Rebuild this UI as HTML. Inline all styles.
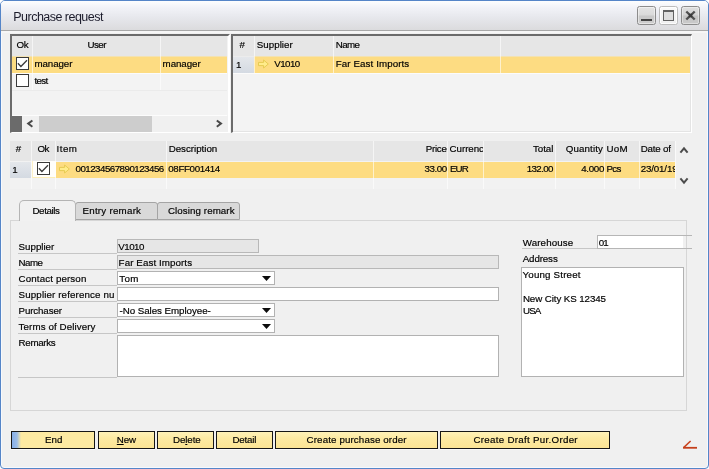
<!DOCTYPE html>
<html><head><meta charset="utf-8"><title>Purchase request</title>
<style>
*{box-sizing:border-box;margin:0;padding:0}
html,body{width:709px;height:469px;overflow:hidden;background:#fff}
body{font-family:"Liberation Sans",sans-serif;font-size:9.75px;color:#000;position:relative}
.a{position:absolute}
.t{position:absolute;white-space:nowrap;line-height:12px;height:12px;color:#000;-webkit-text-stroke:0.18px #000}
#win{left:0;top:0;width:709px;height:469px;background:#f0f0f0;border:1px solid #5585c8;border-radius:5px 5px 4px 4px;box-shadow:inset 0 0 0 1px #f6f9fd}
#title{left:1px;top:1px;width:707px;height:29px;background:linear-gradient(#fdfeff,#f2f3f8 22%,#e7e8ed 55%,#dbdbdd);border-radius:4px 4px 0 0}
#tline{left:1px;top:30px;width:707px;height:1px;background:#a8a8a8}
#tline2{left:1px;top:31px;width:707px;height:2px;background:#f6f6f6}
.panel{background:#f3f3f3;border-top:2px solid #6b6b6b;border-left:2px solid #6b6b6b;border-right:1px solid #fff;border-bottom:1px solid #fff}
.hdr{background:#e6e6e6}
.sel{background:#fddc82}
.vl{position:absolute;width:1px;background:rgba(255,255,255,.6)}
.hl{position:absolute;height:1px;background:#ebebeb}
.cb{position:absolute;width:13px;height:13px;border:1px solid #3a3a3a;background:#fff}
.inp{position:absolute;background:#fff;border:1px solid #b2b2b2;height:14px}
.dis{background:#e6e6e6;border-color:#b8b8b8}
.ul{position:absolute;height:1px;background:#c6c6c6}
.btn{position:absolute;top:431px;height:18px;border:1px solid #161616;background:linear-gradient(#fff2b8,#fdeaa2 40%,#fce595);box-shadow:0 1px 0 #fafafa}
.tab{position:absolute;background:#d9d9d9;border:1px solid #a4a4a4;border-radius:3px 3px 0 0}
.num{background:linear-gradient(#e4e7eb,#d4dae2)}
</style></head><body>
<div id="win" class="a"></div>
<div id="title" class="a"></div>
<div id="tline" class="a"></div>
<div id="tline2" class="a"></div>

<!-- window buttons -->
<div class="a" style="left:637px;top:6px;width:19px;height:19px;border:1px solid #8c8c8c;border-radius:2.5px;background:linear-gradient(#e4e4e4,#dadada 47%,#c8c8c8 53%,#cecece);box-shadow:inset 0 0 0 1px rgba(255,255,255,.45)"></div>
<div class="a" style="left:641px;top:19px;width:11px;height:2px;background:#444"></div>
<div class="a" style="left:659px;top:6px;width:19px;height:19px;border:1px solid #bcbcbc;border-radius:2.5px;background:linear-gradient(#fafafa,#efefef);box-shadow:inset 0 0 0 1px rgba(255,255,255,.8)"></div>
<div class="a" style="left:663px;top:10px;width:11px;height:11px;border:1px solid #626262;border-top-width:2px;background:#dedede"></div>
<div class="a" style="left:681px;top:6px;width:19px;height:19px;border:1px solid #8c8c8c;border-radius:2.5px;background:linear-gradient(#dedede,#d4d4d4 47%,#c4c4c4 53%,#cacaca);box-shadow:inset 0 0 0 1px rgba(255,255,255,.4)"></div>
<svg class="a" style="left:681px;top:6px" width="19" height="19" viewBox="0 0 19 19"><path d="M5.3 5.5 L13.7 13.5 M13.7 5.5 L5.3 13.5" stroke="#505050" stroke-width="2.4" stroke-linecap="butt"/><rect x="7.8" y="7.8" width="3.4" height="3.4" fill="#3a3a3a"/></svg>

<!-- left panel -->
<div class="a panel" style="left:10px;top:34px;width:220px;height:99px;border-right-width:2px"></div>
<div class="a hdr" style="left:12px;top:36px;width:215px;height:20px"></div>
<div class="a" style="left:12px;top:56px;width:215px;height:1px;background:#f3e2b2"></div>
<div class="a sel" style="left:12px;top:57px;width:215px;height:16px"></div>
<div class="vl" style="left:32px;top:36px;height:55px"></div>
<div class="vl" style="left:160px;top:36px;height:55px"></div>
<div class="hl" style="left:12px;top:73px;width:215px;background:#fbfbfb"></div>
<div class="hl" style="left:12px;top:90px;width:215px"></div>
<div class="cb" style="left:16px;top:57px"></div>
<svg class="a" style="left:16px;top:57px" width="13" height="13" viewBox="0 0 13 13"><path d="M1.9 6.3 L4.9 9.5 L11 3.3" fill="none" stroke="#3a3a3a" stroke-width="1.3"/></svg>
<div class="cb" style="left:16px;top:74px"></div>
<!-- scrollbar -->
<div class="a" style="left:12px;top:115px;width:215px;height:1px;background:#fcfcfc"></div>
<div class="a" style="left:12px;top:116px;width:216px;height:16px;background:#f0f0f0"></div>
<div class="a" style="left:10px;top:116px;width:12px;height:16px;background:#6b6b6b"></div>
<div class="a" style="left:39px;top:116px;width:113px;height:16px;background:#cdcdcd"></div>
<svg class="a" style="left:26px;top:119px" width="8" height="10" viewBox="0 0 8 10"><path d="M6.4 1.5 L2.2 4.6 L6.4 7.7" fill="none" stroke="#4a4a4a" stroke-width="2"/></svg>
<svg class="a" style="left:215px;top:119px" width="8" height="10" viewBox="0 0 8 10"><path d="M1.8 1.5 L6 4.6 L1.8 7.7" fill="none" stroke="#4a4a4a" stroke-width="2"/></svg>

<!-- right panel -->
<div class="a panel" style="left:231px;top:34px;width:461px;height:99px;box-shadow:inset -1px -1px 0 #e4e4e4"></div>
<div class="a hdr" style="left:233px;top:36px;width:457px;height:20px"></div>
<div class="a" style="left:233px;top:56px;width:21px;height:1px;background:#ececec"></div>
<div class="a" style="left:254px;top:56px;width:436px;height:1px;background:#f3e2b2"></div>
<div class="a sel" style="left:254px;top:57px;width:436px;height:16px"></div>
<div class="a num" style="left:233px;top:57px;width:21px;height:16px"></div>
<div class="vl" style="left:254px;top:36px;height:38px"></div>
<div class="vl" style="left:333px;top:36px;height:38px"></div>
<div class="vl" style="left:500px;top:36px;height:38px"></div>
<div class="hl" style="left:233px;top:73px;width:457px;background:#fbfbfb"></div>
<svg class="a" style="left:258px;top:59px" width="11" height="10" viewBox="0 0 11 10"><path d="M0.5 3.4 H5.6 V1 L10.3 5 L5.6 9 V6.6 H0.5 Z" fill="#ffec8a" stroke="#e6ca52" stroke-width="1"/></svg>

<!-- items table -->
<div class="a hdr" style="left:10px;top:141px;width:665px;height:20px"></div>
<div class="a" style="left:10px;top:161px;width:665px;height:28px;background:#f2f2f2"></div>
<div class="a sel" style="left:56px;top:162px;width:619px;height:16px"></div>
<div class="a num" style="left:10px;top:162px;width:21px;height:16px"></div>
<div class="a" style="left:32px;top:161px;width:24px;height:17px;background:#fffefb;border-bottom:1px solid #fdeeb8;border-left:1px solid #fdf1c8"></div>
<div class="vl" style="left:31px;top:141px;height:48px"></div>
<div class="vl" style="left:55px;top:141px;height:48px"></div>
<div class="vl" style="left:166px;top:141px;height:48px"></div>
<div class="vl" style="left:373px;top:141px;height:48px"></div>
<div class="vl" style="left:447px;top:141px;height:48px"></div>
<div class="vl" style="left:483px;top:141px;height:48px"></div>
<div class="vl" style="left:555px;top:141px;height:48px"></div>
<div class="vl" style="left:604px;top:141px;height:48px"></div>
<div class="vl" style="left:639px;top:141px;height:48px"></div>
<div class="vl" style="left:675px;top:141px;height:48px;background:#fafafa"></div>
<div class="cb" style="left:37px;top:162px"></div>
<svg class="a" style="left:37px;top:162px" width="13" height="13" viewBox="0 0 13 13"><path d="M1.9 6.3 L4.9 9.5 L11 3.3" fill="none" stroke="#3a3a3a" stroke-width="1.3"/></svg>
<svg class="a" style="left:59px;top:164px" width="11" height="10" viewBox="0 0 11 10"><path d="M0.5 3.4 H5.6 V1 L10.3 5 L5.6 9 V6.6 H0.5 Z" fill="#ffec8a" stroke="#e6ca52" stroke-width="1"/></svg>
<svg class="a" style="left:679px;top:146px" width="10" height="8" viewBox="0 0 10 8"><path d="M1.4 6.6 L5 2.4 L8.6 6.6" fill="none" stroke="#4c4c4c" stroke-width="2"/></svg>
<svg class="a" style="left:679px;top:177px" width="10" height="8" viewBox="0 0 10 8"><path d="M1.4 1.4 L5 5.6 L8.6 1.4" fill="none" stroke="#4c4c4c" stroke-width="2"/></svg>

<!-- tabs -->
<div class="a" style="left:10px;top:220px;width:677px;height:191px;border:1px solid #d6d6d6;background:#f0f0f0"></div>
<div class="tab" style="left:75px;top:202px;width:83px;height:18px"></div>
<div class="tab" style="left:157px;top:202px;width:83px;height:18px"></div>
<div class="tab" style="left:19px;top:200px;width:57px;height:21px;background:#f1f1f1;border-color:#b4b4b4;border-bottom:none;border-radius:5px 5px 0 0"></div>

<!-- form -->
<div class="ul" style="left:18px;top:253px;width:99px"></div>
<div class="ul" style="left:18px;top:269px;width:99px"></div>
<div class="ul" style="left:18px;top:285px;width:99px"></div>
<div class="ul" style="left:18px;top:301px;width:99px"></div>
<div class="ul" style="left:18px;top:317px;width:99px"></div>
<div class="ul" style="left:18px;top:333px;width:99px"></div>
<div class="ul" style="left:18px;top:377px;width:99px"></div>
<div class="inp dis" style="left:117px;top:239px;width:142px"></div>
<div class="inp dis" style="left:117px;top:255px;width:382px"></div>
<div class="inp" style="left:117px;top:271px;width:158px"></div>
<div class="inp" style="left:117px;top:287px;width:382px"></div>
<div class="inp" style="left:117px;top:303px;width:158px"></div>
<div class="inp" style="left:117px;top:319px;width:158px"></div>
<div class="inp" style="left:117px;top:335px;width:382px;height:42px"></div>
<svg class="a" style="left:262px;top:276px" width="9" height="5" viewBox="0 0 9 5"><path d="M0 0 H9 L4.5 5 Z" fill="#0c0c0c"/></svg>
<svg class="a" style="left:262px;top:308px" width="9" height="5" viewBox="0 0 9 5"><path d="M0 0 H9 L4.5 5 Z" fill="#0c0c0c"/></svg>
<svg class="a" style="left:262px;top:324px" width="9" height="5" viewBox="0 0 9 5"><path d="M0 0 H9 L4.5 5 Z" fill="#0c0c0c"/></svg>

<div class="ul" style="left:522px;top:248px;width:75px"></div>
<div class="a" style="left:597px;top:235px;width:95px;height:14px;border-top:1px solid #b6b6b6;border-bottom:1px solid #b6b6b6;border-left:1px solid #b6b6b6"></div>
<div class="a" style="left:598px;top:236px;width:85px;height:12px;background:#fff"></div>
<div class="a" style="left:686px;top:236px;width:1px;height:12px;background:#d6d6d6"></div>
<div class="inp" style="left:521px;top:267px;width:163px;height:110px"></div>

<!-- buttons -->
<div class="btn" style="left:11px;width:84px;background:linear-gradient(90deg,#86aee6,#9cbce6 5px,#fdeaa2 9px)"></div>
<div class="btn" style="left:98px;width:57px"></div>
<div class="btn" style="left:157px;width:57px"></div>
<div class="btn" style="left:216px;width:57px"></div>
<div class="btn" style="left:275px;width:163px"></div>
<div class="btn" style="left:440px;width:170px"></div>
<svg class="a" style="left:680px;top:438px" width="20" height="12" viewBox="0 0 20 12"><path d="M10.6 3 L3.6 9.6" fill="none" stroke="#c8421e" stroke-width="1.5"/><path d="M3 9.8 H17" fill="none" stroke="#c4401c" stroke-width="1.8"/></svg>

<div id="tx" style="position:absolute;left:0;top:0;width:709px;height:469px;will-change:transform">
<div class="t" style="left:13.30px;top:11px;letter-spacing:-0.527px;font-size:12.5px;color:#1c1c2c;-webkit-text-stroke:0">Purchase request</div>
<div class="t" style="left:16.50px;top:39px;letter-spacing:-0.300px;">Ok</div>
<div class="t" style="left:87.40px;top:39px;letter-spacing:-0.533px;">User</div>
<div class="t" style="left:34.40px;top:58px;letter-spacing:-0.067px;">manager</div>
<div class="t" style="left:162.60px;top:58px;letter-spacing:-0.067px;">manager</div>
<div class="t" style="left:34.40px;top:75px;letter-spacing:-0.633px;">test</div>
<div class="t" style="left:239.40px;top:39px;">#</div>
<div class="t" style="left:256.70px;top:39px;letter-spacing:0.043px;">Supplier</div>
<div class="t" style="left:335.70px;top:39px;letter-spacing:-0.567px;">Name</div>
<div class="t" style="left:235.90px;top:59px;">1</div>
<div class="t" style="left:274.20px;top:58px;letter-spacing:-0.550px;">V1010</div>
<div class="t" style="left:335.70px;top:58px;letter-spacing:0.100px;">Far East Imports</div>
<div class="t" style="left:15.80px;top:143px;">#</div>
<div class="t" style="left:37.50px;top:143px;letter-spacing:-0.500px;">Ok</div>
<div class="t" style="left:56.50px;top:143px;letter-spacing:0.500px;">Item</div>
<div class="t" style="left:168.70px;top:143px;letter-spacing:-0.020px;">Description</div>
<div class="t" style="left:425.70px;top:143px;letter-spacing:-0.250px;">Price</div>
<div class="t" style="left:449.60px;top:143px;letter-spacing:-0.050px;width:33.5px;overflow:hidden">Currency</div>
<div class="t" style="left:533.00px;top:143px;letter-spacing:-0.075px;">Total</div>
<div class="t" style="left:565.70px;top:143px;letter-spacing:0.143px;">Quantity</div>
<div class="t" style="left:606.50px;top:143px;letter-spacing:0.250px;">UoM</div>
<div class="t" style="left:640.70px;top:143px;letter-spacing:-0.200px;">Date of</div>
<div class="t" style="left:12.30px;top:164px;">1</div>
<div class="t" style="left:75.50px;top:163px;letter-spacing:-0.524px;">001234567890123456</div>
<div class="t" style="left:168.30px;top:163px;letter-spacing:-0.367px;">08FF001414</div>
<div class="t" style="left:424.50px;top:163px;letter-spacing:-0.450px;">33.00</div>
<div class="t" style="left:450.00px;top:163px;letter-spacing:-0.900px;">EUR</div>
<div class="t" style="left:526.70px;top:163px;letter-spacing:-0.600px;">132.00</div>
<div class="t" style="left:581.20px;top:163px;letter-spacing:-0.300px;">4.000</div>
<div class="t" style="left:606.50px;top:163px;letter-spacing:-0.650px;">Pcs</div>
<div class="t" style="left:640.70px;top:163px;letter-spacing:-0.150px;width:34.8px;overflow:hidden">23/01/19</div>
<div class="t" style="left:32.50px;top:205px;letter-spacing:-0.417px;">Details</div>
<div class="t" style="left:82.50px;top:205px;letter-spacing:0.245px;">Entry remark</div>
<div class="t" style="left:168.00px;top:205px;letter-spacing:0.077px;">Closing remark</div>
<div class="t" style="left:18.60px;top:241px;letter-spacing:-0.014px;">Supplier</div>
<div class="t" style="left:18.60px;top:257px;letter-spacing:-0.533px;">Name</div>
<div class="t" style="left:18.60px;top:273px;letter-spacing:0.123px;">Contact person</div>
<div class="t" style="left:18.60px;top:289px;letter-spacing:0.130px;">Supplier reference nu</div>
<div class="t" style="left:18.60px;top:305px;letter-spacing:-0.138px;">Purchaser</div>
<div class="t" style="left:18.60px;top:321px;letter-spacing:0.100px;">Terms of Delivery</div>
<div class="t" style="left:18.60px;top:337px;letter-spacing:-0.317px;">Remarks</div>
<div class="t" style="left:118.30px;top:241px;letter-spacing:-0.525px;">V1010</div>
<div class="t" style="left:118.60px;top:257px;letter-spacing:0.093px;">Far East Imports</div>
<div class="t" style="left:119.20px;top:273px;letter-spacing:0.400px;">Tom</div>
<div class="t" style="left:119.50px;top:305px;letter-spacing:-0.044px;">-No Sales Employee-</div>
<div class="t" style="left:522.70px;top:237px;letter-spacing:0.137px;">Warehouse</div>
<div class="t" style="left:598.80px;top:237px;letter-spacing:-0.900px;">01</div>
<div class="t" style="left:522.70px;top:253px;letter-spacing:-0.117px;">Address</div>
<div class="t" style="left:522.50px;top:269px;letter-spacing:0.182px;">Young Street</div>
<div class="t" style="left:522.90px;top:293px;letter-spacing:-0.087px;">New City KS 12345</div>
<div class="t" style="left:522.90px;top:305px;letter-spacing:-0.800px;">USA</div>
<div class="t" style="left:45.00px;top:434px;">End</div>
<div class="t" style="left:116.80px;top:434px;letter-spacing:-0.150px;"><u>N</u>ew</div>
<div class="t" style="left:173.00px;top:434px;letter-spacing:-0.100px;">De<u>l</u>ete</div>
<div class="t" style="left:232.50px;top:434px;letter-spacing:-0.200px;">Detail</div>
<div class="t" style="left:306.60px;top:434px;letter-spacing:0.120px;">Create purchase order</div>
<div class="t" style="left:473.50px;top:434px;letter-spacing:0.286px;">Create Draft Pur.Order</div>
</div>
</body></html>
